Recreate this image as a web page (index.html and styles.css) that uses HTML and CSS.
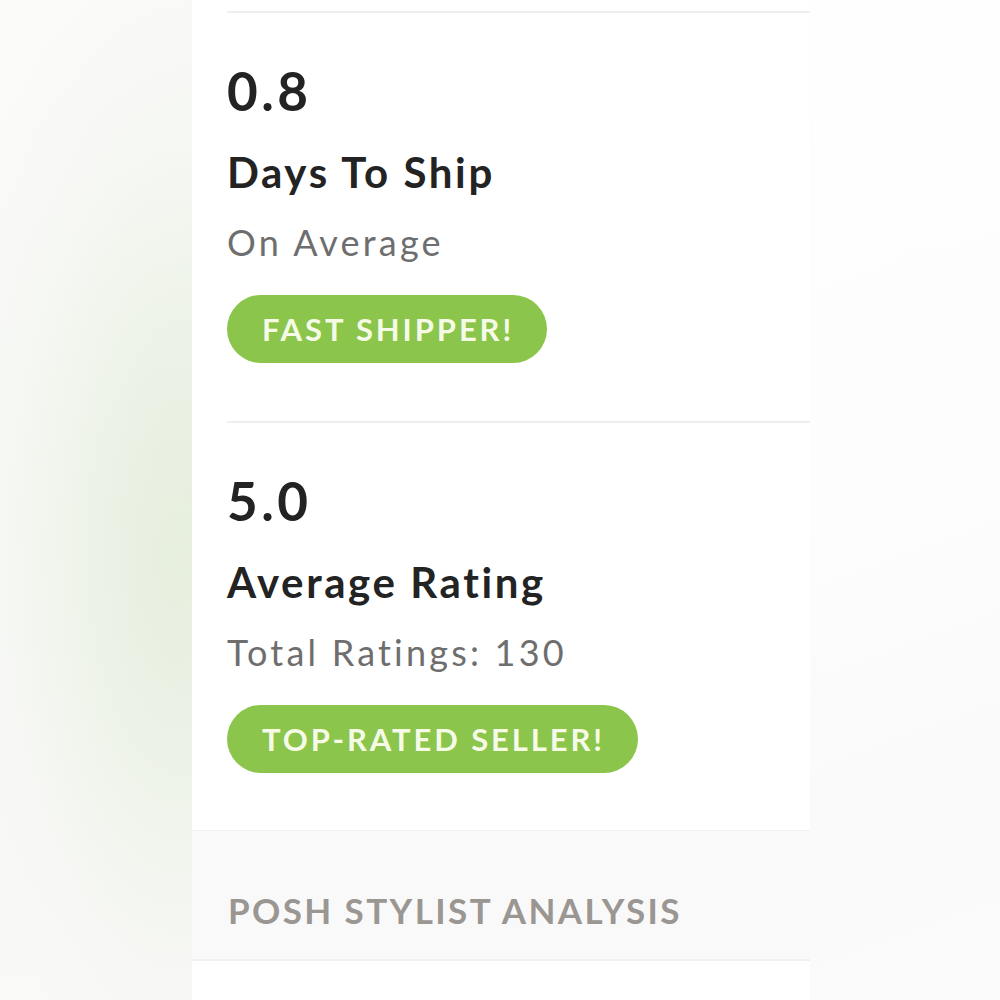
FILE: index.html
```html
<!DOCTYPE html>
<html lang="en">
<head>
<meta charset="utf-8">
<title>Seller Stats</title>
<link rel="stylesheet" href="styles.css">
</head>
<body>
<div class="stage">
  <div class="side side-left"></div>
  <main class="panel">
    <section class="stat">
      <div class="stat-value">0.8</div>
      <div class="stat-title">Days To Ship</div>
      <div class="stat-sub">On Average</div>
      <div class="pill">FAST SHIPPER!</div>
    </section>
    <section class="stat">
      <div class="stat-value">5.0</div>
      <div class="stat-title">Average Rating</div>
      <div class="stat-sub">Total Ratings: 130</div>
      <div class="pill">TOP-RATED SELLER!</div>
    </section>
    <header class="section-head">POSH STYLIST ANALYSIS</header>
    <div class="panel-rest"></div>
  </main>
  <div class="side side-right"></div>
</div>
</body>
</html>
```
FILE: styles.css
```css
html, body {
  margin: 0;
  padding: 0;
  height: 1000px;
  overflow: hidden;
}
body {
  font-family: Lato, "Liberation Sans", sans-serif;
  background: #fdfdfd;
}
.stage {
  display: flex;
  height: 1000px;
}
.side-left {
  width: 192px;
  flex: none;
  background:
    radial-gradient(ellipse 170px 420px at 175px 560px, rgba(226, 236, 216, 0.7), rgba(226, 236, 216, 0) 100%),
    radial-gradient(ellipse 260px 620px at 200px 500px, rgba(238, 243, 233, 0.8), rgba(238, 243, 233, 0) 100%),
    linear-gradient(180deg, #fbfbfa 0%, #f8f9f6 50%, #f9f9f8 100%);
}
.side-right {
  flex: 1;
  background:
    linear-gradient(160deg, #fefefe 0%, #fdfdfd 50%, #faf9f9 80%, #fbfbfb 100%);
}
.panel {
  width: 618px;
  flex: none;
  background: #ffffff;
  display: flex;
  flex-direction: column;
}
.stat {
  margin-left: 35px;
  border-top: 2px solid #efeeee;
  margin-top: 11px;
  padding-top: 48px;
  padding-bottom: 58px;
  display: flex;
  flex-direction: column;
  align-items: flex-start;
}
.stat + .stat {
  margin-top: 0;
  padding-bottom: 57px;
}
.stat-value {
  font-size: 53px;
  line-height: 60px;
  font-weight: 700;
  color: #232323;
  letter-spacing: 3.5px;
}
.stat-title {
  margin-top: 27px;
  font-size: 42px;
  line-height: 48px;
  font-weight: 700;
  color: #232323;
  letter-spacing: 2.6px;
}
.stat-sub {
  margin-top: 26px;
  font-size: 36px;
  line-height: 40px;
  color: #6e6e6e;
  letter-spacing: 3.2px;
}
.pill {
  margin-top: 33px;
  height: 68px;
  padding: 0 33px 0 35px;
  border-radius: 34px;
  background: #8bc54b;
  color: #f5fbe6;
  font-size: 31px;
  font-weight: 700;
  letter-spacing: 2.9px;
  display: flex;
  align-items: center;
}
.section-head {
  background: #faf9f9;
  border-top: 1px solid #f1f0f0;
  border-bottom: 2px solid #f1f0f0;
  height: 131px;
  padding-left: 36px;
  display: flex;
  align-items: flex-end;
  box-sizing: border-box;
  font-size: 35px;
  line-height: 35px;
  font-weight: 700;
  color: #9a9692;
  letter-spacing: 2.4px;
  padding-bottom: 31px;
}
.panel-rest {
  flex: 1;
  background: #ffffff;
}
```
